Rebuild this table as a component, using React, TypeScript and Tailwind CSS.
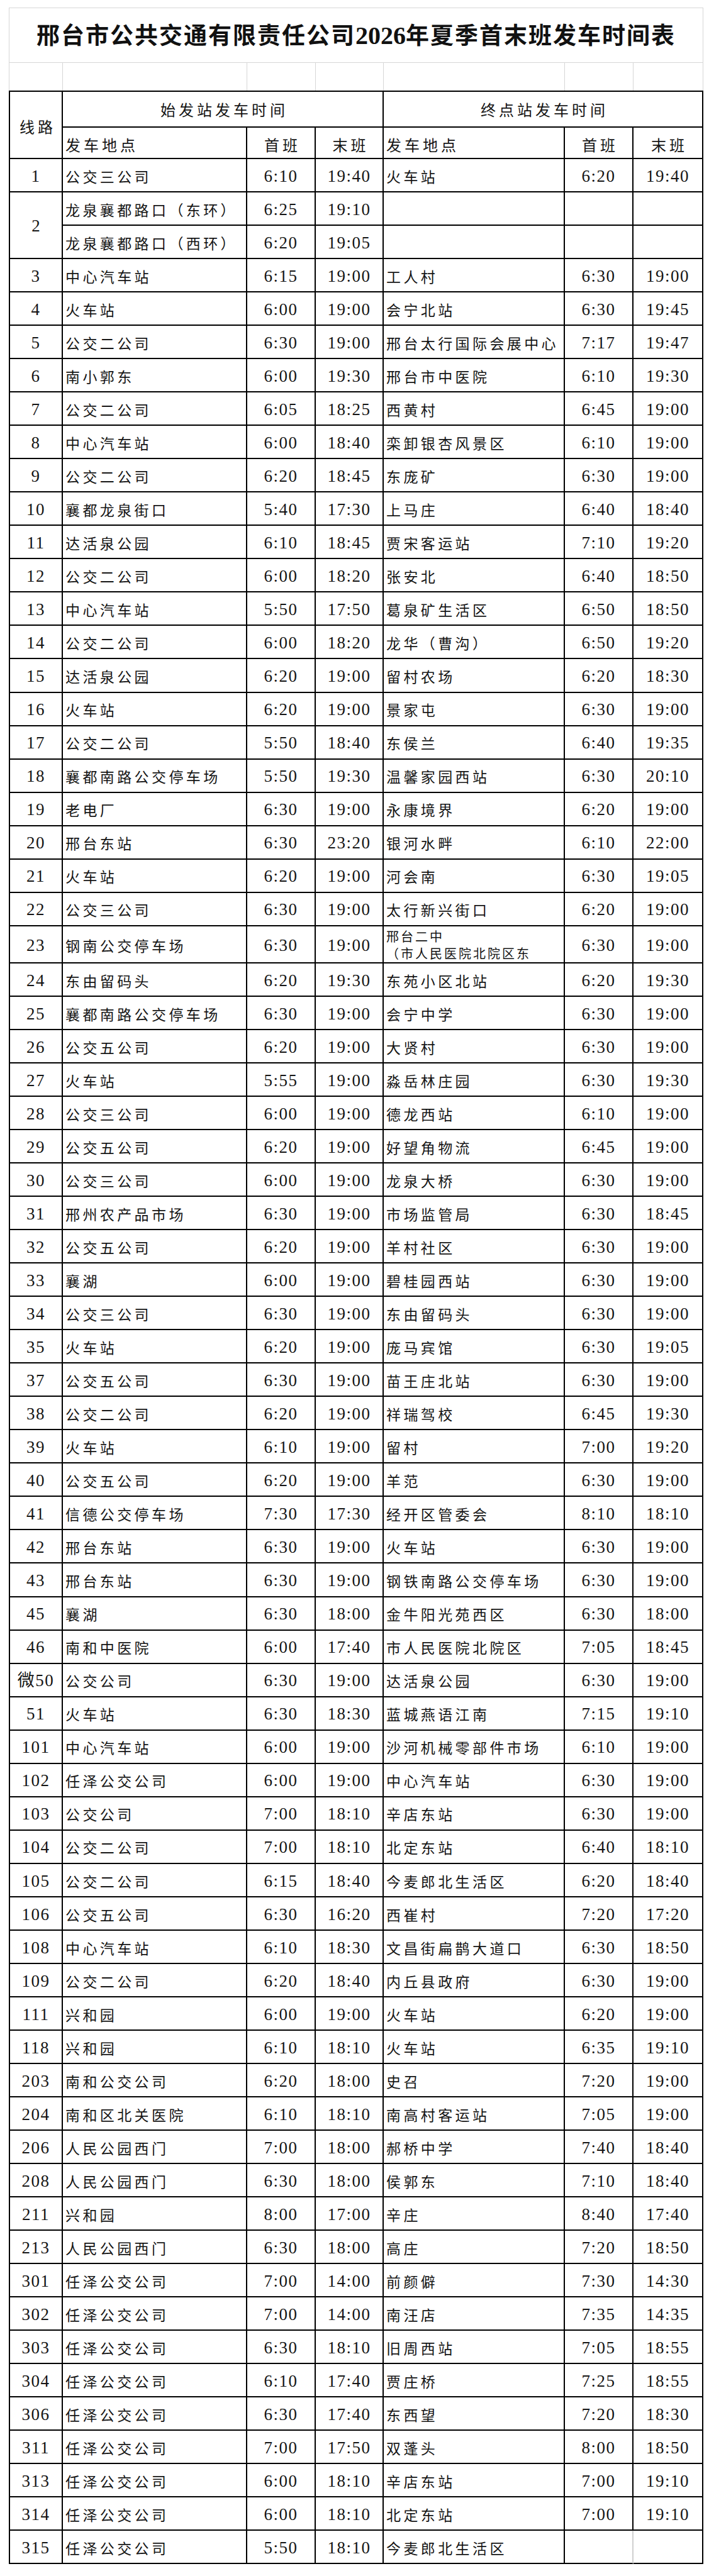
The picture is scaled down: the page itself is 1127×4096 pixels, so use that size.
type Line = {
  no: string;
  from: string;
  f1: string;
  f2: string;
  to: string;
  t1: string;
  t2: string;
};

const LINES: Line[] = [
  { no: "1", from: "公交三公司", f1: "6:10", f2: "19:40", to: "火车站", t1: "6:20", t2: "19:40" },
  { no: "3", from: "中心汽车站", f1: "6:15", f2: "19:00", to: "工人村", t1: "6:30", t2: "19:00" },
  { no: "4", from: "火车站", f1: "6:00", f2: "19:00", to: "会宁北站", t1: "6:30", t2: "19:45" },
  { no: "5", from: "公交二公司", f1: "6:30", f2: "19:00", to: "邢台太行国际会展中心", t1: "7:17", t2: "19:47" },
  { no: "6", from: "南小郭东", f1: "6:00", f2: "19:30", to: "邢台市中医院", t1: "6:10", t2: "19:30" },
  { no: "7", from: "公交二公司", f1: "6:05", f2: "18:25", to: "西黄村", t1: "6:45", t2: "19:00" },
  { no: "8", from: "中心汽车站", f1: "6:00", f2: "18:40", to: "栾卸银杏风景区", t1: "6:10", t2: "19:00" },
  { no: "9", from: "公交二公司", f1: "6:20", f2: "18:45", to: "东庞矿", t1: "6:30", t2: "19:00" },
  { no: "10", from: "襄都龙泉街口", f1: "5:40", f2: "17:30", to: "上马庄", t1: "6:40", t2: "18:40" },
  { no: "11", from: "达活泉公园", f1: "6:10", f2: "18:45", to: "贾宋客运站", t1: "7:10", t2: "19:20" },
  { no: "12", from: "公交二公司", f1: "6:00", f2: "18:20", to: "张安北", t1: "6:40", t2: "18:50" },
  { no: "13", from: "中心汽车站", f1: "5:50", f2: "17:50", to: "葛泉矿生活区", t1: "6:50", t2: "18:50" },
  { no: "14", from: "公交二公司", f1: "6:00", f2: "18:20", to: "龙华（曹沟）", t1: "6:50", t2: "19:20" },
  { no: "15", from: "达活泉公园", f1: "6:20", f2: "19:00", to: "留村农场", t1: "6:20", t2: "18:30" },
  { no: "16", from: "火车站", f1: "6:20", f2: "19:00", to: "景家屯", t1: "6:30", t2: "19:00" },
  { no: "17", from: "公交二公司", f1: "5:50", f2: "18:40", to: "东侯兰", t1: "6:40", t2: "19:35" },
  { no: "18", from: "襄都南路公交停车场", f1: "5:50", f2: "19:30", to: "温馨家园西站", t1: "6:30", t2: "20:10" },
  { no: "19", from: "老电厂", f1: "6:30", f2: "19:00", to: "永康境界", t1: "6:20", t2: "19:00" },
  { no: "20", from: "邢台东站", f1: "6:30", f2: "23:20", to: "银河水畔", t1: "6:10", t2: "22:00" },
  { no: "21", from: "火车站", f1: "6:20", f2: "19:00", to: "河会南", t1: "6:30", t2: "19:05" },
  { no: "22", from: "公交三公司", f1: "6:30", f2: "19:00", to: "太行新兴街口", t1: "6:20", t2: "19:00" },
  { no: "23", from: "钢南公交停车场", f1: "6:30", f2: "19:00", to: "邢台二中\n（市人民医院北院区东", t1: "6:30", t2: "19:00" },
  { no: "24", from: "东由留码头", f1: "6:20", f2: "19:30", to: "东苑小区北站", t1: "6:20", t2: "19:30" },
  { no: "25", from: "襄都南路公交停车场", f1: "6:30", f2: "19:00", to: "会宁中学", t1: "6:30", t2: "19:00" },
  { no: "26", from: "公交五公司", f1: "6:20", f2: "19:00", to: "大贤村", t1: "6:30", t2: "19:00" },
  { no: "27", from: "火车站", f1: "5:55", f2: "19:00", to: "淼岳林庄园", t1: "6:30", t2: "19:30" },
  { no: "28", from: "公交三公司", f1: "6:00", f2: "19:00", to: "德龙西站", t1: "6:10", t2: "19:00" },
  { no: "29", from: "公交五公司", f1: "6:20", f2: "19:00", to: "好望角物流", t1: "6:45", t2: "19:00" },
  { no: "30", from: "公交三公司", f1: "6:00", f2: "19:00", to: "龙泉大桥", t1: "6:30", t2: "19:00" },
  { no: "31", from: "邢州农产品市场", f1: "6:30", f2: "19:00", to: "市场监管局", t1: "6:30", t2: "18:45" },
  { no: "32", from: "公交五公司", f1: "6:20", f2: "19:00", to: "羊村社区", t1: "6:30", t2: "19:00" },
  { no: "33", from: "襄湖", f1: "6:00", f2: "19:00", to: "碧桂园西站", t1: "6:30", t2: "19:00" },
  { no: "34", from: "公交三公司", f1: "6:30", f2: "19:00", to: "东由留码头", t1: "6:30", t2: "19:00" },
  { no: "35", from: "火车站", f1: "6:20", f2: "19:00", to: "庞马宾馆", t1: "6:30", t2: "19:05" },
  { no: "37", from: "公交五公司", f1: "6:30", f2: "19:00", to: "苗王庄北站", t1: "6:30", t2: "19:00" },
  { no: "38", from: "公交二公司", f1: "6:20", f2: "19:00", to: "祥瑞驾校", t1: "6:45", t2: "19:30" },
  { no: "39", from: "火车站", f1: "6:10", f2: "19:00", to: "留村", t1: "7:00", t2: "19:20" },
  { no: "40", from: "公交五公司", f1: "6:20", f2: "19:00", to: "羊范", t1: "6:30", t2: "19:00" },
  { no: "41", from: "信德公交停车场", f1: "7:30", f2: "17:30", to: "经开区管委会", t1: "8:10", t2: "18:10" },
  { no: "42", from: "邢台东站", f1: "6:30", f2: "19:00", to: "火车站", t1: "6:30", t2: "19:00" },
  { no: "43", from: "邢台东站", f1: "6:30", f2: "19:00", to: "钢铁南路公交停车场", t1: "6:30", t2: "19:00" },
  { no: "45", from: "襄湖", f1: "6:30", f2: "18:00", to: "金牛阳光苑西区", t1: "6:30", t2: "18:00" },
  { no: "46", from: "南和中医院", f1: "6:00", f2: "17:40", to: "市人民医院北院区", t1: "7:05", t2: "18:45" },
  { no: "微50", from: "公交公司", f1: "6:30", f2: "19:00", to: "达活泉公园", t1: "6:30", t2: "19:00" },
  { no: "51", from: "火车站", f1: "6:30", f2: "18:30", to: "蓝城燕语江南", t1: "7:15", t2: "19:10" },
  { no: "101", from: "中心汽车站", f1: "6:00", f2: "19:00", to: "沙河机械零部件市场", t1: "6:10", t2: "19:00" },
  { no: "102", from: "任泽公交公司", f1: "6:00", f2: "19:00", to: "中心汽车站", t1: "6:30", t2: "19:00" },
  { no: "103", from: "公交公司", f1: "7:00", f2: "18:10", to: "辛店东站", t1: "6:30", t2: "19:00" },
  { no: "104", from: "公交二公司", f1: "7:00", f2: "18:10", to: "北定东站", t1: "6:40", t2: "18:10" },
  { no: "105", from: "公交二公司", f1: "6:15", f2: "18:40", to: "今麦郎北生活区", t1: "6:20", t2: "18:40" },
  { no: "106", from: "公交五公司", f1: "6:30", f2: "16:20", to: "西崔村", t1: "7:20", t2: "17:20" },
  { no: "108", from: "中心汽车站", f1: "6:10", f2: "18:30", to: "文昌街扁鹊大道口", t1: "6:30", t2: "18:50" },
  { no: "109", from: "公交二公司", f1: "6:20", f2: "18:40", to: "内丘县政府", t1: "6:30", t2: "19:00" },
  { no: "111", from: "兴和园", f1: "6:00", f2: "19:00", to: "火车站", t1: "6:20", t2: "19:00" },
  { no: "118", from: "兴和园", f1: "6:10", f2: "18:10", to: "火车站", t1: "6:35", t2: "19:10" },
  { no: "203", from: "南和公交公司", f1: "6:20", f2: "18:00", to: "史召", t1: "7:20", t2: "19:00" },
  { no: "204", from: "南和区北关医院", f1: "6:10", f2: "18:10", to: "南高村客运站", t1: "7:05", t2: "19:00" },
  { no: "206", from: "人民公园西门", f1: "7:00", f2: "18:00", to: "郝桥中学", t1: "7:40", t2: "18:40" },
  { no: "208", from: "人民公园西门", f1: "6:30", f2: "18:00", to: "侯郭东", t1: "7:10", t2: "18:40" },
  { no: "211", from: "兴和园", f1: "8:00", f2: "17:00", to: "辛庄", t1: "8:40", t2: "17:40" },
  { no: "213", from: "人民公园西门", f1: "6:30", f2: "18:00", to: "高庄", t1: "7:20", t2: "18:50" },
  { no: "301", from: "任泽公交公司", f1: "7:00", f2: "14:00", to: "前颜僻", t1: "7:30", t2: "14:30" },
  { no: "302", from: "任泽公交公司", f1: "7:00", f2: "14:00", to: "南汪店", t1: "7:35", t2: "14:35" },
  { no: "303", from: "任泽公交公司", f1: "6:30", f2: "18:10", to: "旧周西站", t1: "7:05", t2: "18:55" },
  { no: "304", from: "任泽公交公司", f1: "6:10", f2: "17:40", to: "贾庄桥", t1: "7:25", t2: "18:55" },
  { no: "306", from: "任泽公交公司", f1: "6:30", f2: "17:40", to: "东西望", t1: "7:20", t2: "18:30" },
  { no: "311", from: "任泽公交公司", f1: "7:00", f2: "17:50", to: "双蓬头", t1: "8:00", t2: "18:50" },
  { no: "313", from: "任泽公交公司", f1: "6:00", f2: "18:10", to: "辛店东站", t1: "7:00", t2: "19:10" },
  { no: "314", from: "任泽公交公司", f1: "6:00", f2: "18:10", to: "北定东站", t1: "7:00", t2: "19:10" },
  { no: "315", from: "任泽公交公司", f1: "5:50", f2: "18:10", to: "今麦郎北生活区", t1: "", t2: "" },
];

const CELL = "border-r-2 border-b-2 border-black flex items-center overflow-hidden";
const PLACE =
  "pl-[4px] pt-[3px] whitespace-nowrap text-[23px] tracking-[4.4px] text-[#151515] font-['Noto_Sans_CJK_SC',sans-serif]";
const TIME =
  "justify-center pt-[3px] text-[27px] tracking-[1.5px] text-[#151515] font-['Liberation_Serif','Noto_Sans_CJK_SC',serif]";
const HEAD = "text-[24px] tracking-[5px] text-[#151515] font-['Noto_Sans_CJK_SC',sans-serif]";

// line 23 has a two-line terminal name, so its row is taller
const rowH = (tall: boolean) => (tall ? "h-[59.2px]" : "h-[53.04px]");

function Place({ text, tall = false }: { text: string; tall?: boolean }) {
  if (text.includes("\n")) {
    return (
      <div
        className={`${CELL} ${rowH(tall)} pl-[4px] pt-[1px] text-[20px] tracking-[3px] leading-[27px] whitespace-pre text-[#151515] font-['Noto_Sans_CJK_SC',sans-serif]`}
      >
        {text}
      </div>
    );
  }
  return <div className={`${CELL} ${PLACE} ${rowH(tall)}`}>{text}</div>;
}

function Time({ text, tall = false, faint = false }: { text: string; tall?: boolean; faint?: boolean }) {
  return <div className={`${CELL} ${TIME} ${rowH(tall)} ${faint ? "border-r-[#cfcfcf]" : ""}`}>{text}</div>;
}

function LineRow({ line }: { line: Line }) {
  const tall = line.to.includes("\n");
  return (
    <>
      <div className={`${CELL} ${TIME} ${rowH(tall)} tracking-[0px]`}>{line.no}</div>
      <Place text={line.from} tall={tall} />
      <Time text={line.f1} tall={tall} />
      <Time text={line.f2} tall={tall} />
      <Place text={line.to} tall={tall} />
      <Time text={line.t1} tall={tall} faint={line.no === "315"} />
      <Time text={line.t2} tall={tall} />
    </>
  );
}

export default function App() {
  return (
    <div className="w-[1127px] min-h-[4096px] bg-white pt-[12px]">
      {/* title block with the light sheet grid */}
      <div className="ml-[14px] w-[1104px] border-x border-t border-[#d6d6d6]">
        <div className="h-[87px] flex items-center justify-center border-b border-[#d6d6d6] pt-[2px]">
          <h1 className="text-[37px] font-bold tracking-[2px] text-[#111] font-['Noto_Sans_CJK_SC',sans-serif]">
            邢台市公共交通有限责任公司
            <span className="text-[40px] tracking-[0px] font-['Liberation_Serif',serif]">2026</span>
            年夏季首末班发车时间表
          </h1>
        </div>
        <div className="grid grid-cols-[85px_293px_109px_108px_288px_109px_111px] h-[44px]">
          <div className="border-r border-[#d6d6d6]" />
          <div className="border-r border-[#d6d6d6]" />
          <div className="border-r border-[#d6d6d6]" />
          <div className="border-r border-[#d6d6d6]" />
          <div className="border-r border-[#d6d6d6]" />
          <div className="border-r border-[#d6d6d6]" />
          <div />
        </div>
      </div>

      {/* timetable */}
      <div className="ml-[14px] w-[1104px] border-l-2 border-t-2 border-black grid grid-cols-[84px_293px_109px_108px_288px_109px_111px]">
        <div className={`${CELL} ${HEAD} row-span-2 justify-center pl-[6px] pt-[4px]`}>线路</div>
        <div className={`${CELL} ${HEAD} col-span-3 h-[57px] justify-center pl-[5px]`}>始发站发车时间</div>
        <div className={`${CELL} ${HEAD} col-span-3 h-[57px] justify-center pl-[5px]`}>终点站发车时间</div>
        <div className={`${CELL} ${HEAD} h-[50px] pl-[4px] pt-[6px]`}>发车地点</div>
        <div className={`${CELL} ${HEAD} h-[50px] justify-center pl-[5px] pt-[6px]`}>首班</div>
        <div className={`${CELL} ${HEAD} h-[50px] justify-center pl-[5px] pt-[6px]`}>末班</div>
        <div className={`${CELL} ${HEAD} h-[50px] pl-[4px] pt-[6px]`}>发车地点</div>
        <div className={`${CELL} ${HEAD} h-[50px] justify-center pl-[5px] pt-[6px]`}>首班</div>
        <div className={`${CELL} ${HEAD} h-[50px] justify-center pl-[5px] pt-[6px]`}>末班</div>

        <LineRow line={LINES[0]} />

        {/* line 2 runs two loops, east and west */}
        <div className={`${CELL} row-span-2 justify-center pt-[3px] text-[27px] text-[#151515] font-['Liberation_Serif',serif]`}>2</div>
        <Place text="龙泉襄都路口（东环）" />
        <Time text="6:25" />
        <Time text="19:10" />
        <Place text="" />
        <Time text="" />
        <Time text="" />
        <Place text="龙泉襄都路口（西环）" />
        <Time text="6:20" />
        <Time text="19:05" />
        <Place text="" />
        <Time text="" />
        <Time text="" />

        {LINES.slice(1).map((line) => (
          <LineRow key={line.no} line={line} />
        ))}
      </div>
    </div>
  );
}
